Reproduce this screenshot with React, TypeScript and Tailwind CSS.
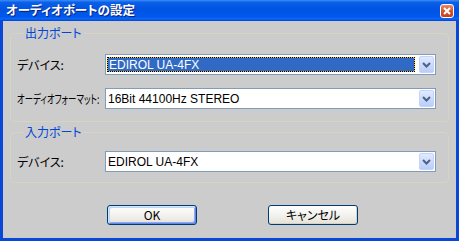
import React from 'react';

// shared font stacks
const JP = "font-['Noto_Sans_CJK_JP',sans-serif] [font-feature-settings:'palt']";

function Chevron() {
  return (
    <svg width="9" height="6" viewBox="0 0 9 6" className="block">
      <path d="M1 1 L4.5 4.5 L8 1" fill="none" stroke="#4d6185" strokeWidth="2" />
    </svg>
  );
}

function Combo({ value, selected = false }: { value: string; selected?: boolean }) {
  return (
    <div className="flex h-[21px] w-[331px] border border-[#7f9db9] bg-white font-['Liberation_Sans',sans-serif] text-[12px] text-black">
      <div className="flex min-w-0 flex-1 items-stretch py-[2px] pl-[1px] pr-[3px]">
        {selected ? (
          <div className="flex w-full bg-[#e9b94c]">
            <div className="flex w-full items-center border border-dotted border-black bg-[#316ac5] bg-clip-padding pl-[1px] text-white">
              {value}
            </div>
          </div>
        ) : (
          <span className="flex items-center pl-[1px] whitespace-nowrap">{value}</span>
        )}
      </div>
      <div className="m-[1px] flex w-[15px] items-center justify-center rounded-[2px] border border-[#c3d3fd] bg-[linear-gradient(to_bottom,#e1eafe,#b9cdf9)]">
        <Chevron />
      </div>
    </div>
  );
}

function Row({ label, children, squeeze = false }: { label: string; children: React.ReactNode; squeeze?: boolean }) {
  return (
    <div className="flex items-center">
      <div className={`w-[88px] whitespace-nowrap text-[12px] leading-[14px] text-black ${JP}`}>
        {squeeze ? (
          <span className="inline-block origin-left scale-x-[0.7]">{label}</span>
        ) : (
          label
        )}
      </div>
      {children}
    </div>
  );
}

function Group({ title, className, children }: { title: string; className: string; children: React.ReactNode }) {
  return (
    <fieldset className={`mx-[7px] rounded-[4px] border border-[#d6d5c2] pl-[6px] ${className}`}>
      <legend className={`ml-[6px] px-[2px] text-[12px] leading-[14px] text-[#0046d5] ${JP}`}>{title}</legend>
      {children}
    </fieldset>
  );
}

function XpButton({ label, isDefault = false }: { label: string; isDefault?: boolean }) {
  return (
    <button
      className={`flex h-[20px] w-[90px] items-center justify-center rounded-[3px] border border-[#003c74] bg-[linear-gradient(to_bottom,#ffffff,#f0efea_60%,#e3e1d8)] text-[12px] leading-none text-black ${JP} ${
        isDefault
          ? 'shadow-[inset_1px_1px_0_#cee7ff,inset_-1px_-1px_0_#6982ee,inset_2px_2px_0_#bcd4f6,inset_-2px_-2px_0_#89ade4]'
          : 'shadow-[inset_-1px_-1px_0_#d6d0c5]'
      }`}
    >
      {label}
    </button>
  );
}

export default function App() {
  return (
    <div className="flex h-[241px] w-[459px] flex-col">
      {/* Title bar */}
      <div className="flex h-[21px] shrink-0 items-center justify-between bg-[linear-gradient(to_bottom,#3b8cf6_0%,#0a5fe8_12%,#0054e3_45%,#0058ec_80%,#0a68f8_90%,#0042d4_100%)] pl-[6px] pr-[5px]">
        <span className={`text-[12.5px] leading-none font-bold text-white [text-shadow:1px_1px_0_#0a1e7a] ${JP}`}>
          オーディオポートの設定
        </span>
        <div className="flex h-[14px] w-[14px] items-center justify-center rounded-[3px] border border-white bg-[linear-gradient(to_bottom,#e88a6a,#d7542c_50%,#c2401c)]">
          <svg width="8" height="8" viewBox="0 0 8 8" className="block">
            <path d="M1 1 L7 7 M7 1 L1 7" stroke="white" strokeWidth="2" />
          </svg>
        </div>
      </div>

      {/* Client area inside the blue frame */}
      <div className="flex flex-1 flex-col border-x-[3px] border-b-[3px] border-[#0847d8] bg-[#cccccc]">
        <Group title="出力ポート" className="mt-[5px] pt-[14px] pb-[12px]">
          <div className="flex flex-col gap-[13px]">
            <Row label="デバイス:">
              <Combo value="EDIROL UA-4FX" selected />
            </Row>
            <Row label="オーディオフォーマット:" squeeze>
              <Combo value="16Bit 44100Hz STEREO" />
            </Row>
          </div>
        </Group>

        <Group title="入力ポート" className="mt-[3px] pt-[12px] pb-[10px]">
          <Row label="デバイス:">
            <Combo value="EDIROL UA-4FX" />
          </Row>
        </Group>

        <div className="mt-[22px] flex gap-[71px] pl-[104px]">
          <XpButton label="OK" isDefault />
          <XpButton label="キャンセル" />
        </div>
      </div>
    </div>
  );
}
